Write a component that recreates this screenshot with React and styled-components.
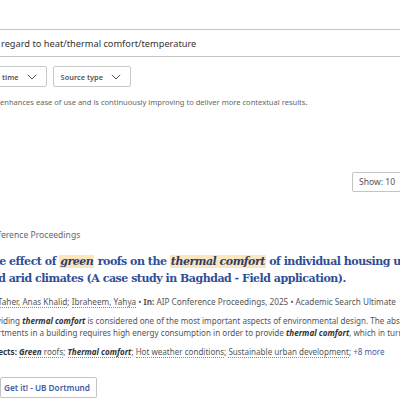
import styled, { createGlobalStyle } from 'styled-components';

const GlobalStyle = createGlobalStyle`
  body {
    margin: 0;
    overflow: hidden;
    background: #fff;
    font-family: 'Noto Sans', 'Open Sans', sans-serif;
    color: #444;
  }
`;

const S = {
  Page: styled.div`
    width: 468px;
    margin-left: -16px;
    padding-top: 29px;
  `,
  SearchBox: styled.div`
    height: 28px;
    box-sizing: border-box;
    border: 1px solid #c4c4c4;
    display: flex;
    align-items: center;
    padding-left: 16px;
    font-size: 9.25px;
    color: #333;
  `,
  Filters: styled.div`
    display: flex;
    gap: 6px;
    margin-top: 9px;
  `,
  FilterButton: styled.button`
    height: 21px;
    box-sizing: border-box;
    border: 1px solid #c9c9c9;
    border-radius: 2px;
    background: #fff;
    display: flex;
    align-items: center;
    gap: 8px;
    padding: 0 9px 0 ${(props) => props.$padLeft || 7}px;
    font-family: 'Noto Sans', sans-serif;
    font-size: 7.4px;
    font-weight: 600;
    color: #555;
    white-space: nowrap;
  `,
  Info: styled.p`
    margin: 10px 0 0;
    padding-left: 16px;
    font-size: 7.55px;
    line-height: 10px;
    color: #666;
    white-space: nowrap;
  `,
  ResultsBar: styled.div`
    display: flex;
    justify-content: flex-end;
    margin-top: 65px;
  `,
  ShowSelect: styled.div`
    width: 100px;
    height: 20px;
    box-sizing: border-box;
    border: 1px solid #c4c4c4;
    border-radius: 2px;
    display: flex;
    align-items: center;
    padding-left: 6px;
    font-size: 8.6px;
    color: #555;
  `,
  Card: styled.article`
    margin-top: 38px;
    white-space: nowrap;
  `,
  TypeLabel: styled.div`
    font-size: 8.6px;
    line-height: 11px;
    color: #666;
    text-indent: -2px;
  `,
  Title: styled.h2`
    margin: 12px 0 0;
    font-family: 'DejaVu Serif', 'Liberation Serif', serif;
    font-size: 11px;
    line-height: 17px;
    font-weight: 700;
    letter-spacing: -0.48px;
    color: #2f4e96;
  `,
  Mark: styled.em`
    font-style: italic;
    background: #fde6bc;
    color: #2e3d6c;
    padding: 0 1px;
  `,
  Meta: styled.div`
    margin-top: 9px;
    font-size: 8.2px;
    line-height: 11px;
    color: #555;
  `,
  Dotted: styled.span`
    border-bottom: 1px dotted #888;
  `,
  Abstract: styled.p`
    margin: 7.5px 0 0;
    font-size: 8.1px;
    line-height: 12px;
    color: #555;

    & b {
      font-style: italic;
      color: #333;
    }
  `,
  Subjects: styled.div`
    margin-top: 7.5px;
    font-size: 8.05px;
    line-height: 11px;
    color: #555;
    text-indent: -3px;

    & b {
      color: #333;
    }
  `,
  More: styled.span`
    color: #3d5ca8;
  `,
  GetIt: styled.button`
    margin: 19.5px 0 0 16px;
    height: 21px;
    box-sizing: border-box;
    border: 1px solid #c4c4c4;
    border-radius: 2px;
    background: #fff;
    padding: 0 6px 0 3px;
    font-family: 'Noto Sans', sans-serif;
    font-size: 8.2px;
    font-weight: 600;
    color: #3d5ca8;
    box-shadow: 0 1px 1px rgba(0, 0, 0, 0.08);
  `,
};

function Chevron() {
  return (
    <svg width="10" height="6" viewBox="0 0 10 6" fill="none">
      <path d="M0.8 0.8l4.2 4.2 4.2-4.2" stroke="#555" strokeWidth="1" />
    </svg>
  );
}

const subjects = [
  { text: 'Green', rest: ' roofs', bold: true },
  { text: 'Thermal comfort', rest: '', bold: true },
  { text: 'Hot weather conditions', rest: '', bold: false },
  { text: 'Sustainable urban development', rest: '', bold: false },
];

export default function App() {
  return (
    <>
      <GlobalStyle />
      <S.Page>
        <S.SearchBox>regard to heat/thermal comfort/temperature</S.SearchBox>

        <S.Filters>
          <S.FilterButton $padLeft={6}>
            All time <Chevron />
          </S.FilterButton>
          <S.FilterButton>
            Source type <Chevron />
          </S.FilterButton>
        </S.Filters>

        <S.Info>
          enhances ease of use and is continuously improving to deliver more
          contextual results.
        </S.Info>

        <S.ResultsBar>
          <S.ShowSelect>Show: 10</S.ShowSelect>
        </S.ResultsBar>

        <S.Card>
          <S.TypeLabel>Conference Proceedings</S.TypeLabel>
          <S.Title>
            The effect of <S.Mark>green</S.Mark> roofs on the{' '}
            <S.Mark>thermal comfort</S.Mark> of individual housing units in hot
            <br />
            and arid climates (A case study in Baghdad - Field application).
          </S.Title>

          <S.Meta>
            By: <S.Dotted>Taher, Anas Khalid</S.Dotted>;{' '}
            <S.Dotted>Ibraheem, Yahya</S.Dotted> • <b>In:</b> AIP Conference
            Proceedings, 2025 • Academic Search Ultimate
          </S.Meta>

          <S.Abstract>
            Providing <b>thermal comfort</b> is considered one of the most
            important aspects of environmental design. The absence of
            <br />
            apartments in a building requires high energy consumption in order
            to provide <b>thermal comfort</b>, which in turn
          </S.Abstract>

          <S.Subjects>
            <b>Subjects:</b>{' '}
            {subjects.map(({ text, rest, bold }) => (
              <span key={text}>
                <S.Dotted>
                  {bold ? <b><i>{text}</i></b> : text}
                  {rest}
                </S.Dotted>
                ;{' '}
              </span>
            ))}
            <S.More>+8 more</S.More>
          </S.Subjects>
        </S.Card>

        <S.GetIt>Get it! - UB Dortmund</S.GetIt>
      </S.Page>
    </>
  );
}
